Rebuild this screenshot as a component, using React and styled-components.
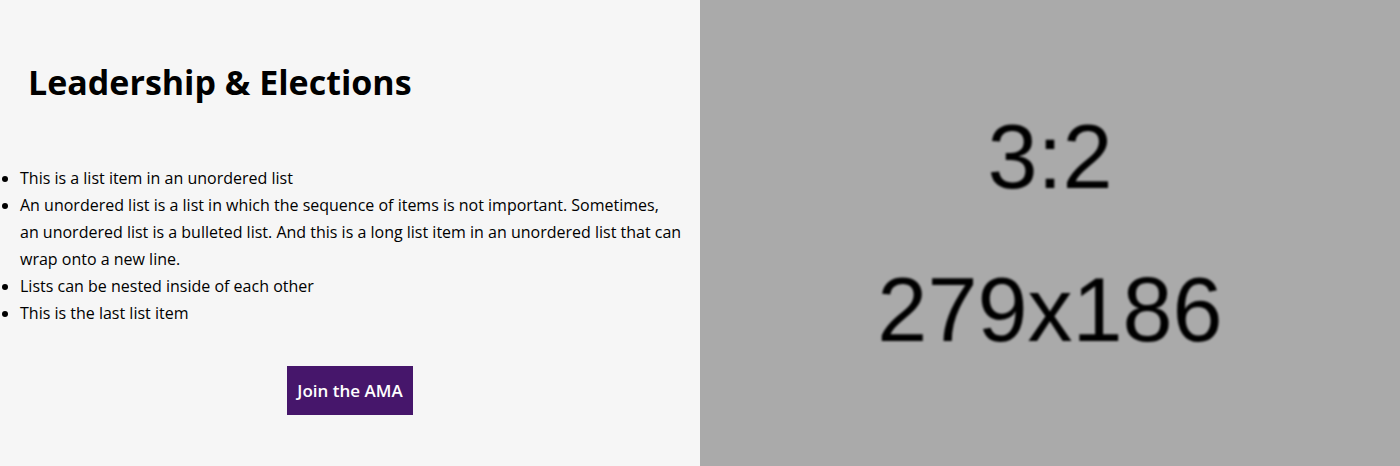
import React from "react";
import styled, { createGlobalStyle } from "styled-components";

const GlobalStyle = createGlobalStyle`
  *, *::before, *::after { box-sizing: border-box; }
  body {
    margin: 0;
    font-family: "Open Sans", sans-serif;
    color: #000;
    background: #f6f6f6;
  }
`;

const Banner = styled.section`
  display: grid;
  grid-template-columns: 1fr 1fr;
  background: #f6f6f6;
`;

const Content = styled.div`
  display: flex;
  flex-direction: column;
  padding: 55px 0 51px;
`;

const Heading = styled.h2`
  margin: 0;
  padding: 0 28px;
  font-size: 34px;
  line-height: 54px;
  font-weight: 700;
`;

const List = styled.ul`
  margin: 56px 0 39px;
  padding: 0 12px 0 20px;
  font-size: 16px;
  line-height: 27px;
`;

const Join = styled.button`
  align-self: center;
  padding: 11px 10px;
  border: 0;
  background: #46166b;
  color: #fff;
  font: 600 17px/27px "Open Sans", sans-serif;
  cursor: pointer;
`;

const Placeholder = styled.div`
  display: flex;
  flex-direction: column;
  align-items: center;
  justify-content: center;
  padding-top: 2px;
  background: #aaa;
  font-family: "Liberation Sans", Arial, sans-serif;
  font-size: 90px;
  line-height: 153px;
`;

const PlaceholderLine = styled.span`
  filter: blur(1px);
`;

const items = [
  "This is a list item in an unordered list",
  "An unordered list is a list in which the sequence of items is not important. Sometimes, an\u00a0unordered list is a bulleted list. And this is a long list item in an unordered list that can wrap onto a new line.",
  "Lists can be nested inside of each other",
  "This is the last list item",
];

export default function App() {
  return (
    <>
      <GlobalStyle />
      <Banner>
        <Content>
          <Heading>Leadership &amp; Elections</Heading>
          <List>
            {items.map((item) => (
              <li key={item}>{item}</li>
            ))}
          </List>
          <Join type="button">Join the AMA</Join>
        </Content>
        <Placeholder>
          <PlaceholderLine>3:2</PlaceholderLine>
          <PlaceholderLine>279x186</PlaceholderLine>
        </Placeholder>
      </Banner>
    </>
  );
}
